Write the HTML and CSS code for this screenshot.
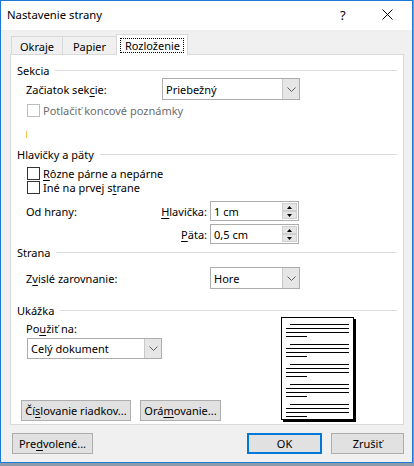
FILE: index.html
```html
<!DOCTYPE html>
<html lang="sk">
<head>
<meta charset="utf-8">
<title>Nastavenie strany</title>
<link rel="stylesheet" href="styles.css">
</head>
<body>
<div class="window">
  <div class="titlebar">
    <span class="title">Nastavenie strany</span>
    <span class="help">?</span>
    <span class="close"><svg width="11" height="11" viewBox="0 0 11 11"><path d="M0.5 0.5 L10.5 10.5 M10.5 0.5 L0.5 10.5" stroke="#000" stroke-width="1" fill="none"/></svg></span>
  </div>
  <div class="client">
    <div class="tabs">
      <div class="tab t-okraje">Okraje</div>
      <div class="tab t-papier">Papier</div>
      <div class="tab active t-rozl"><span class="focus">Rozloženie</span></div>
    </div>
    <div class="panel">
      <div class="group-head gh-sekcia"><span>Sekcia</span></div>
      <div class="row r-start">
        <span class="label l-start">Začiatok sek<u>c</u>ie:</span>
        <div class="combo c-start"><span class="val">Priebežný</span><span class="arrow"><svg width="9" height="5" viewBox="0 0 9 5"><path d="M0.5 0.5 L4.5 4.5 L8.5 0.5" stroke="#606060" fill="none"/></svg></span></div>
      </div>
      <div class="row check disabled r-potl">
        <span class="box"></span><span>Potlačiť koncové poznámky</span>
      </div>
      <div class="row r-mark"><span class="mark"></span></div>

      <div class="group-head gh-hlav"><span>Hlavičky a päty</span></div>
      <div class="row check r-c1"><span class="box"></span><span><u>R</u>ôzne párne a nepárne</span></div>
      <div class="row check r-c2"><span class="box"></span><span>Iné na prvej s<u>t</u>rane</span></div>
      <div class="row r-spin1">
        <div class="labels"><span>Od hrany:</span><span><u>H</u>lavička:</span></div>
        <div class="spin"><span class="val">1 cm</span><span class="btns"><span class="sb up"><svg width="5" height="3" viewBox="0 0 5 3"><path d="M2.5 0 L5 3 L0 3Z" fill="#000"/></svg></span><span class="sb down"><svg width="5" height="3" viewBox="0 0 5 3"><path d="M0 0 L5 0 L2.5 3Z" fill="#000"/></svg></span></span></div>
      </div>
      <div class="row r-spin2">
        <div class="labels"><span></span><span><u>P</u>äta:</span></div>
        <div class="spin"><span class="val">0,5 cm</span><span class="btns"><span class="sb up"><svg width="5" height="3" viewBox="0 0 5 3"><path d="M2.5 0 L5 3 L0 3Z" fill="#000"/></svg></span><span class="sb down"><svg width="5" height="3" viewBox="0 0 5 3"><path d="M0 0 L5 0 L2.5 3Z" fill="#000"/></svg></span></span></div>
      </div>

      <div class="group-head gh-strana"><span>Strana</span></div>
      <div class="row r-zvis">
        <span class="label l-zvis">Z<u>v</u>islé zarovnanie:</span>
        <div class="combo c-hore"><span class="val">Hore</span><span class="arrow"><svg width="9" height="5" viewBox="0 0 9 5"><path d="M0.5 0.5 L4.5 4.5 L8.5 0.5" stroke="#606060" fill="none"/></svg></span></div>
      </div>

      <div class="group-head gh-ukazka"><span>Ukážka</span></div>
      <div class="preview-area">
        <div class="left-col">
          <div class="label l-pouz">Po<u>u</u>žiť na:</div>
          <div class="combo c-cely"><span class="val">Celý dokument</span><span class="arrow"><svg width="9" height="5" viewBox="0 0 9 5"><path d="M0.5 0.5 L4.5 4.5 L8.5 0.5" stroke="#606060" fill="none"/></svg></span></div>
          <div class="btn-row">
            <span class="btn b-cisl">Čí<u>s</u>lovanie riadkov...</span>
            <span class="btn b-oram">Orá<u>m</u>ovanie...</span>
          </div>
        </div>
        <div class="page">
          <div class="para"><i class="ln first"></i><i class="ln"></i><i class="ln"></i><i class="ln last"></i></div>
          <div class="para"><i class="ln first"></i><i class="ln"></i><i class="ln"></i><i class="ln last"></i></div>
          <div class="para"><i class="ln first"></i><i class="ln"></i><i class="ln"></i><i class="ln last"></i></div>
          <div class="para"><i class="ln first"></i><i class="ln"></i><i class="ln"></i><i class="ln last"></i></div>
          <div class="para"><i class="ln first"></i><i class="ln"></i><i class="ln"></i><i class="ln last"></i></div>
        </div>
      </div>
    </div>
    <div class="footer">
      <span class="btn b-pred">Pre<u>d</u>volené...</span>
      <span class="spacer"></span>
      <span class="btn default b-ok">OK</span>
      <span class="btn b-zrus">Zrušiť</span>
    </div>
  </div>
</div>
</body>
</html>
```

FILE: styles.css
```css
* { box-sizing: border-box; }
html, body { margin: 0; padding: 0; }
body {
  width: 414px;
  height: 466px;
  overflow: hidden;
  background: #8c9aab;
  font-family: "Noto Sans", "Liberation Sans", sans-serif;
  font-size: 11px;
  color: #000;
}
u { text-decoration: underline; text-underline-offset: 2px; }

.window {
  width: 413px;
  height: 463px;
  border: 1px solid #1c7ad6;
  background: #f0f0f0;
  display: flex;
  flex-direction: column;
}

.titlebar {
  height: 29px;
  background: #fff;
  display: flex;
  align-items: center;
  padding: 0 0 2px 6px;
  flex: none;
}
.title { font-size: 11.3px; flex: 1; }
.help { font-size: 13px; width: 16px; margin-right: 26px; }
.close { width: 11px; height: 11px; margin-right: 19px; display: flex; }

.client {
  flex: 1;
  padding: 3px 0 0 9px;
}

.tabs {
  display: flex;
  align-items: flex-end;
  height: 21px;
  padding-left: 1px;
}
.tab {
  height: 18px;
  border: 1px solid #d9d9d9;
  border-bottom: none;
  background: #f0f0f0;
  display: flex;
  align-items: center;
  justify-content: center;
  padding-top: 2px;
}
.t-okraje { width: 52px; }
.t-papier { width: 55px; margin-left: -1px; }
.tab.active {
  height: 21px;
  width: 72px;
  margin-left: -1px;
  background: #fff;
  position: relative;
  z-index: 1;
  margin-bottom: -1px;
  padding-top: 1px;
}
.focus {
  border: 1px dotted #000;
  padding: 0 3px 0 4px;
  height: 15px;
  line-height: 13px;
}

.panel {
  width: 394px;
  height: 371px;
  background: #fff;
  border: 1px solid #d9d9d9;
  display: flex;
  flex-direction: column;
}

.group-head {
  height: 14px;
  display: flex;
  align-items: center;
  padding-left: 6px;
  padding-right: 6px;
  line-height: 14px;
}
.group-head::after {
  content: "";
  flex: 1;
  border-top: 1px solid #dcdcdc;
  margin-left: 6px;
  margin-top: -1px;
}
.gh-sekcia { margin-top: 9px; }
.gh-hlav { margin-top: 10px; }
.gh-strana { margin-top: 2px; }
.gh-ukazka { margin-top: 15px; }

.row {
  display: flex;
  align-items: center;
  padding-left: 15px;
}
.r-start { height: 22px; }
.l-start { width: 136px; }
.l-zvis { width: 184px; }

.combo {
  height: 22px;
  border: 1px solid #acacac;
  background: #fff;
  display: flex;
  align-items: stretch;
}
.combo .val { flex: 1; padding-left: 3px; display: flex; align-items: center; }
.combo .arrow {
  width: 17px;
  background: #e6e6e6;
  border-left: 1px solid #c8c8c8;
  display: flex;
  align-items: center;
  justify-content: center;
}
.c-start { width: 138px; }
.c-hore { width: 90px; }
.c-cely { width: 135px; height: 21px; margin-left: 16px; margin-top: 2px; }

.check { height: 13px; padding-left: 16px; }
.check .box {
  width: 13px;
  height: 13px;
  border: 1px solid #333;
  background: #fff;
  margin-right: 3px;
  flex: none;
}
.disabled { color: #6d6d6d; }
.disabled .box { border-color: #bcbcbc; }
.r-potl { margin-top: 4px; }
.r-mark { margin-top: 14px; height: 7px; }
.mark { width: 1px; height: 7px; background: #f2c14e; }
.r-c1 { margin-top: 5px; }
.r-c2 { margin-top: 1px; }

.r-spin1 { margin-top: 7px; height: 20px; }
.r-spin2 { margin-top: 3px; height: 20px; }
.labels {
  width: 184px;
  display: flex;
  justify-content: space-between;
  padding-right: 3px;
}
.spin {
  width: 89px;
  height: 20px;
  border: 1px solid #acacac;
  background: #fff;
  display: flex;
}
.spin .val { flex: 1; padding-left: 3px; display: flex; align-items: center; }
.spin .btns {
  width: 16px;
  display: flex;
  flex-direction: column;
  padding: 1px 1px 1px 0;
  gap: 0;
}
.sb {
  flex: 1;
  background: #e5e5e5;
  border: 1px solid #cfcfcf;
  display: flex;
  align-items: center;
  justify-content: center;
}

.r-zvis { margin-top: 7px; height: 22px; }

.preview-area { display: flex; flex: 1; }
.left-col { width: 270px; display: flex; flex-direction: column; }
.l-pouz { margin-top: 4px; height: 14px; line-height: 14px; padding-left: 15px; }
.btn-row { margin-top: 41px; display: flex; gap: 9px; padding-left: 10px; }

.btn {
  height: 21px;
  border: 1px solid #adadad;
  background: #e1e1e1;
  display: inline-flex;
  align-items: center;
  justify-content: center;
  flex: none;
}
.b-cisl { width: 110px; }
.b-oram { width: 81px; }

.page {
  width: 73px;
  height: 103px;
  margin-top: -1px;
  border: 1px solid #000;
  box-shadow: 2px 2px 0 #000;
  background: #fff;
  padding: 6px 0 0 4px;
  display: flex;
  flex-direction: column;
  gap: 7px;
}
.para { display: flex; flex-direction: column; gap: 3px; }
.ln { display: block; height: 1px; background: #000; width: 63px; }
.ln.first { margin-left: 4px; width: 59px; }
.ln.last { width: 21px; }

.footer {
  display: flex;
  align-items: center;
  margin-top: 8px;
  padding-left: 2px;
}
.footer .btn { height: 21px; }
.spacer { flex: 1; }
.b-pred { width: 81px; }
.b-ok { width: 75px; border: 2px solid #0078d7; }
.b-zrus { width: 73px; margin-left: 9px; margin-right: 8px; }
```
